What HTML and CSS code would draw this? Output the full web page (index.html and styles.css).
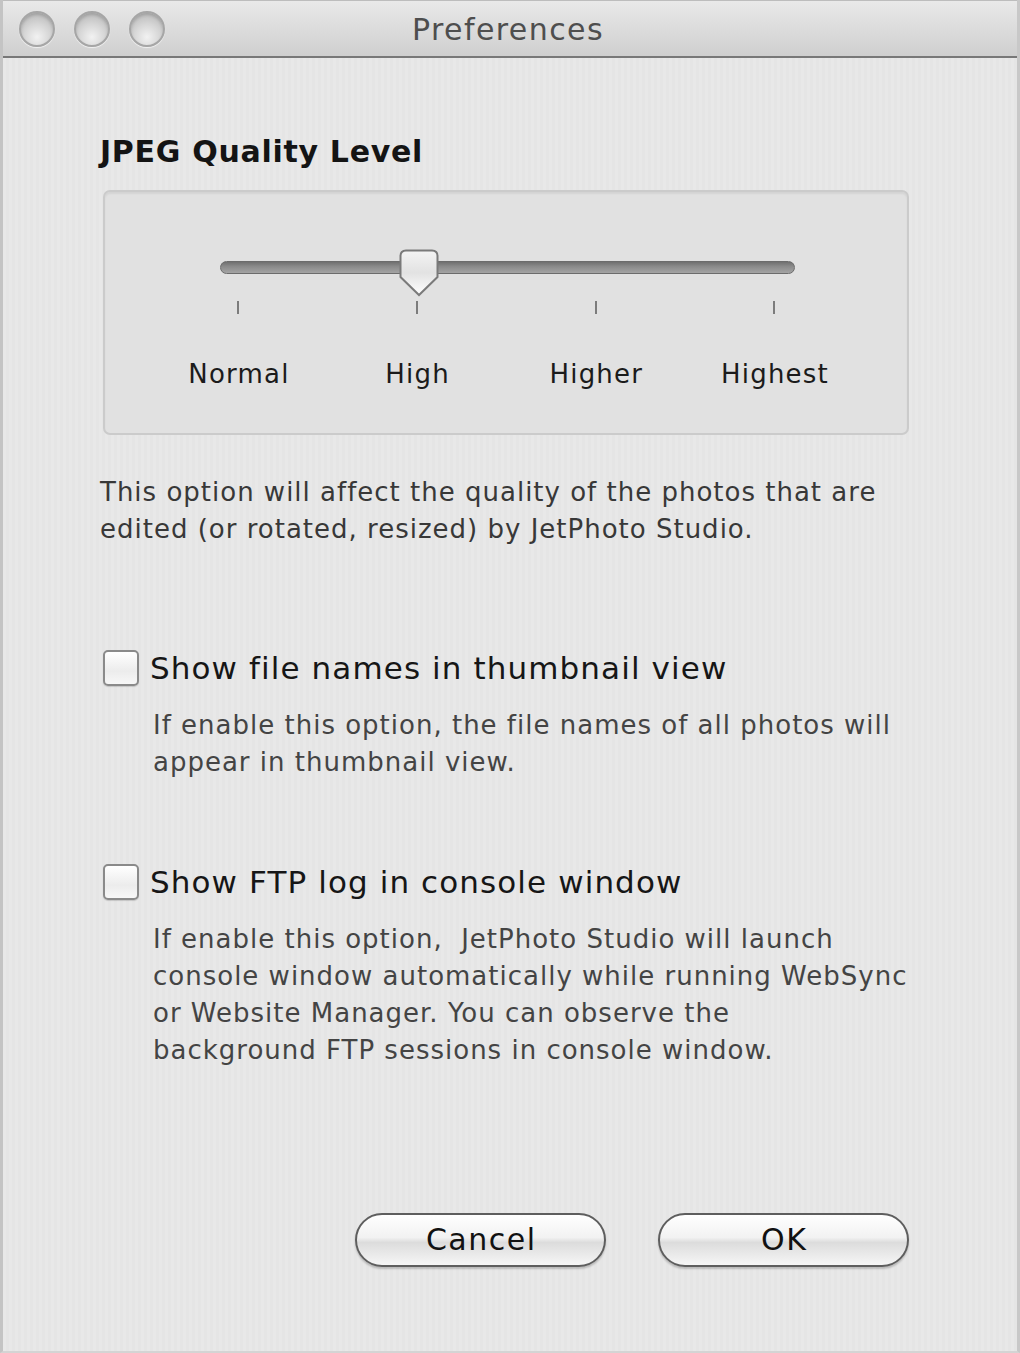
FILE: index.html
```html
<!DOCTYPE html>
<html>
<head>
<meta charset="utf-8">
<title>Preferences</title>
<link rel="stylesheet" href="styles.css">
</head>
<body>
<div class="window">
  <div class="titlebar">
    <div class="lights">
      <span class="light"></span>
      <span class="light"></span>
      <span class="light"></span>
    </div>
    <div class="title">Preferences</div>
  </div>
  <div class="content">
    <h1 class="heading">JPEG Quality Level</h1>
    <div class="groupbox">
      <div class="slider">
        <div class="track"></div>
        <svg class="thumb" width="40" height="48" viewBox="0 0 40 48">
          <defs>
            <linearGradient id="tg" x1="0" y1="0" x2="0" y2="1">
              <stop offset="0" stop-color="#f4f4f4"/>
              <stop offset="0.5" stop-color="#e2e2e2"/>
              <stop offset="1" stop-color="#ffffff"/>
            </linearGradient>
          </defs>
          <path d="M7 1.5 H33 Q38.5 1.5 38.5 7 V28 L20 46 L1.5 28 V7 Q1.5 1.5 7 1.5 Z" fill="url(#tg)" stroke="#7a7a7a" stroke-width="2"/>
        </svg>
      </div>
      <div class="scale">
        <div class="stop"><span class="tick"></span><span class="stop-label">Normal</span></div>
        <div class="stop"><span class="tick"></span><span class="stop-label">High</span></div>
        <div class="stop"><span class="tick"></span><span class="stop-label">Higher</span></div>
        <div class="stop"><span class="tick"></span><span class="stop-label">Highest</span></div>
      </div>
    </div>
    <p class="desc">This option will affect the quality of the photos that are<br>edited (or rotated, resized) by JetPhoto Studio.</p>

    <div class="option first">
      <span class="checkbox"></span>
      <span class="option-label">Show file names in thumbnail view</span>
    </div>
    <p class="subdesc">If enable this option, the file names of all photos will<br>appear in thumbnail view.</p>

    <div class="option second">
      <span class="checkbox"></span>
      <span class="option-label">Show FTP log in console window</span>
    </div>
    <p class="subdesc">If enable this option,&nbsp; JetPhoto Studio will launch<br>console window automatically while running WebSync<br>or Website Manager. You can observe the<br>background FTP sessions in console window.</p>

    <div class="buttons">
      <button class="btn">Cancel</button>
      <button class="btn">OK</button>
    </div>
  </div>
</div>
</body>
</html>
```

FILE: styles.css
```css
html, body {
  margin: 0;
  padding: 0;
}

body {
  width: 1020px;
  height: 1353px;
  overflow: hidden;
  font-family: "DejaVu Sans", "Open Sans", sans-serif;
  background: #e6e6e6;
}

.window {
  box-sizing: border-box;
  width: 1020px;
  height: 1353px;
  display: flex;
  flex-direction: column;
  background: repeating-linear-gradient(90deg, #e8e8e8 0, #e8e8e8 3px, #e5e5e5 3px, #e5e5e5 6px);
  border-left: 3px solid #c4c4c4;
  border-right: 3px solid #c8c8c8;
  border-bottom: 2px solid #d4d4d4;
}

.titlebar {
  position: relative;
  height: 55px;
  flex: none;
  display: flex;
  align-items: center;
  background: linear-gradient(#e9e9e9, #dcdcdc 50%, #cfcfcf);
  border-top: 1px solid #bdbdbd;
  border-bottom: 2px solid #787878;
}

.lights {
  display: flex;
  gap: 19px;
  padding-left: 16px;
}

.light {
  width: 36px;
  height: 36px;
  border-radius: 50%;
  box-sizing: border-box;
  border: 2px solid #a6a6a6;
  background: radial-gradient(circle at 50% 75%, #f2f2f2 0, #d6d6d6 45%, #bdbdbd 80%);
  box-shadow: inset 0 2px 3px rgba(0,0,0,0.15), 0 1px 1px rgba(255,255,255,0.7);
}

.title {
  position: absolute;
  left: 0;
  right: 4px;
  top: 9px;
  text-align: center;
  font-size: 30px;
  line-height: 40px;
  letter-spacing: 1.4px;
  color: #4e4e4e;
}

.content {
  flex: 1;
  display: flex;
  flex-direction: column;
  padding: 0 108px 84px 97px;
}

.heading {
  margin: 74px 0 0 0;
  font-size: 30px;
  line-height: 40px;
  font-weight: 700;
  letter-spacing: 0.7px;
  color: #141414;
}

.groupbox {
  margin-top: 18px;
  margin-left: 3px;
  height: 245px;
  box-sizing: border-box;
  border: 2px solid #cbcbcb;
  border-radius: 7px;
  background: #e1e1e1;
  box-shadow: inset 0 2px 2px rgba(0,0,0,0.06);
}

.slider {
  position: relative;
  width: 575px;
  height: 14px;
  margin: 69px 0 0 115px;
}

.track {
  height: 13px;
  border-radius: 7px;
  box-sizing: border-box;
  border: 1px solid #6c6c6c;
  background: linear-gradient(#707070, #8a8a8a 40%, #a4a4a4);
}

.thumb {
  position: absolute;
  left: 179px;
  top: -12px;
}

.scale {
  display: grid;
  grid-template-columns: repeat(4, 178.7px);
  margin: 26px 0 0 44px;
}

.stop {
  display: flex;
  flex-direction: column;
  align-items: center;
}

.tick {
  width: 2px;
  height: 13px;
  background: #7c7c7c;
}

.stop-label {
  margin-top: 42px;
  padding-left: 1.2px;
  font-size: 26px;
  line-height: 36px;
  letter-spacing: 1.2px;
  color: #1b1b1b;
}

.desc {
  margin: 39px 0 0 0;
  font-size: 26px;
  line-height: 37px;
  letter-spacing: 1px;
  white-space: nowrap;
  color: #383838;
}

.option {
  display: flex;
  align-items: center;
  gap: 11px;
  margin-left: 3px;
  height: 40px;
}

.option.first {
  margin-top: 100px;
}

.option.second {
  margin-top: 81px;
}

.checkbox {
  width: 36px;
  height: 36px;
  box-sizing: border-box;
  border: 2px solid #8a8a8a;
  border-radius: 5px;
  background: linear-gradient(#ffffff, #ececec 60%, #f7f7f7);
  box-shadow: 0 1px 1px rgba(0,0,0,0.15);
  flex: none;
}

.option-label {
  font-size: 31px;
  line-height: 40px;
  letter-spacing: 1.1px;
  white-space: nowrap;
  color: #161616;
}

.subdesc {
  margin: 19px 0 0 53px;
  font-size: 26px;
  line-height: 37px;
  letter-spacing: 1px;
  white-space: nowrap;
  color: #444;
}

.buttons {
  margin-top: auto;
  display: flex;
  justify-content: flex-end;
  gap: 52px;
}

.btn {
  width: 251px;
  height: 54px;
  box-sizing: border-box;
  border: 2px solid #5e5e5e;
  border-radius: 27px;
  background: linear-gradient(#ffffff, #f2f2f2 45%, #dcdcdc 55%, #f6f6f6);
  box-shadow: 0 2px 2px rgba(0,0,0,0.2);
  font-family: "DejaVu Sans", "Open Sans", sans-serif;
  font-size: 30px;
  line-height: 48px;
  letter-spacing: 1.5px;
  color: #111;
  padding: 0 0 0 1.5px;
}
```
